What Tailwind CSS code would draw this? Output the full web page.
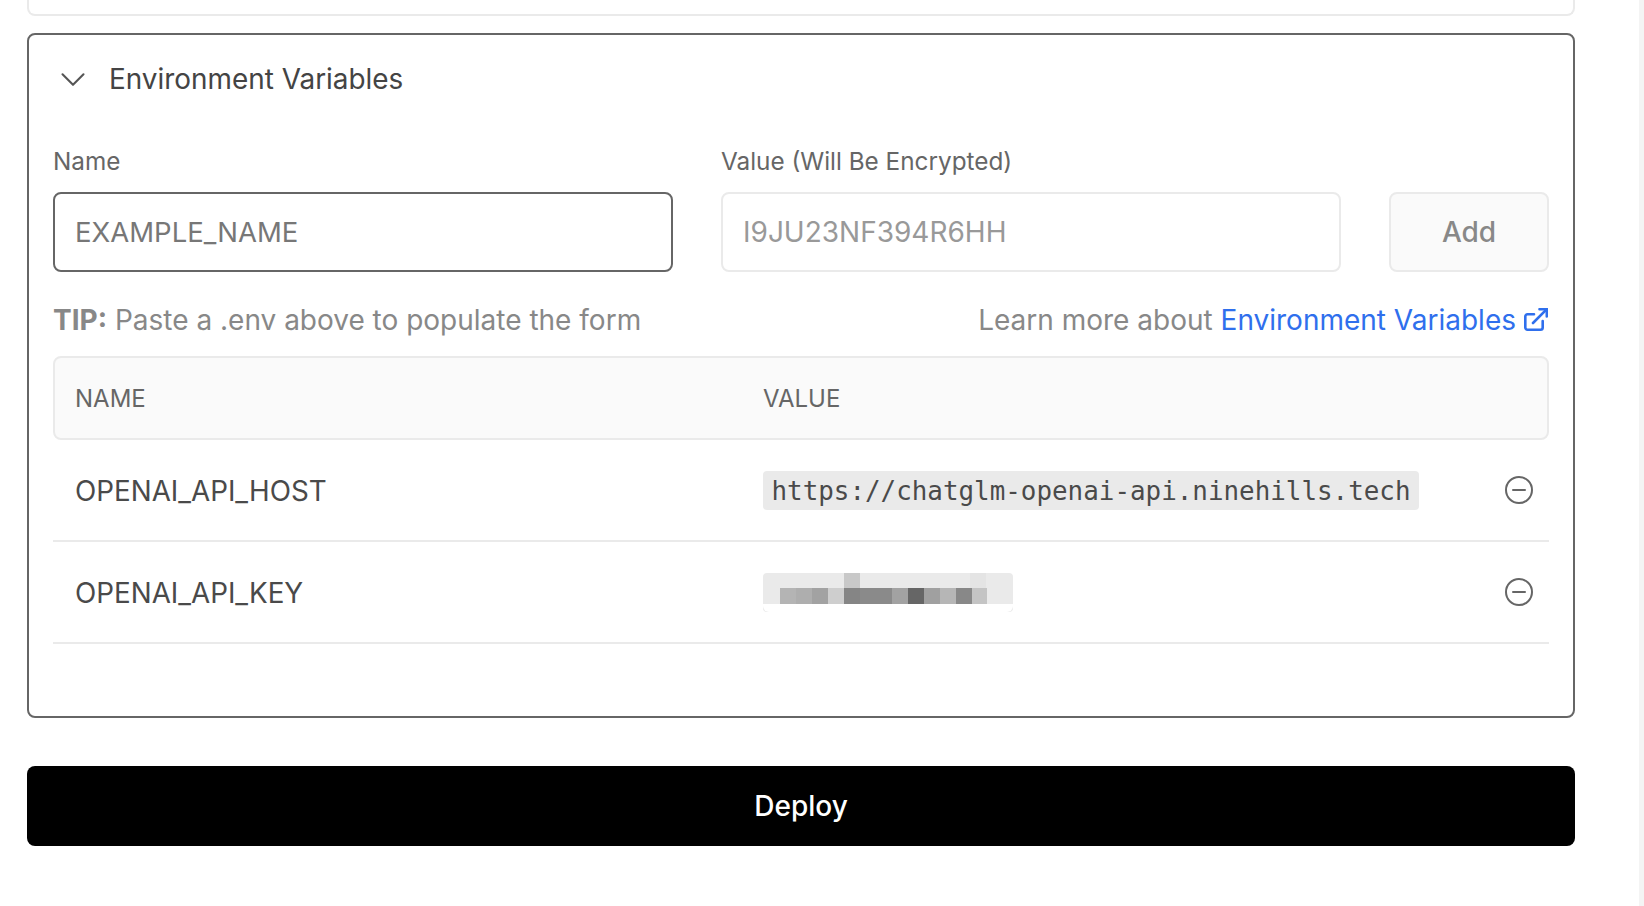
<!DOCTYPE html>
<html lang="en">
<head>
    <meta charset="UTF-8">
    <title>Environment Variables</title>
    <script src="https://cdn.jsdelivr.net/npm/@tailwindcss/browser@4"></script>
</head>
<body class="relative bg-white font-['Inter',sans-serif] overflow-hidden h-[906px]">
    <div class="w-[1548px] ml-[27px]">
        <!-- bottom edge of the card above -->
        <div class="h-[16px] border-2 border-t-0 border-[#eaeaea] rounded-b-[8px]"></div>

        <!-- Environment Variables panel -->
        <section class="mt-[17px] h-[685px] border-2 border-[#666] rounded-[8px] px-[24px]">
            <div class="flex items-center h-[87px] text-[#444]">
                <svg class="w-[28px] h-[28px] ml-[6px]" viewBox="0 0 24 24" fill="none" stroke="#555" stroke-width="1.8" stroke-linecap="round" stroke-linejoin="round"><path d="M3 8l9 9 9-9"/></svg>
                <span class="ml-[22px] pt-[2px] text-[27.900px]">Environment Variables</span>
            </div>

            <div class="flex items-end mt-[22px]">
                <div class="w-[620px]">
                    <label class="block text-[24.300px] leading-[34px] text-[#666]">Name</label>
                    <div class="mt-[14px] h-[80px] flex items-center px-[20px] pt-[2px] border-2 border-[#666] rounded-[8px] text-[27.500px] text-[#777]">EXAMPLE_NAME</div>
                </div>
                <div class="w-[620px] ml-[48px]">
                    <label class="block text-[24.300px] leading-[34px] text-[#666]">Value (Will Be Encrypted)</label>
                    <div class="mt-[14px] h-[80px] flex items-center px-[20px] border-2 border-[#eaeaea] rounded-[8px] text-[28px] text-[#999]">I9JU23NF394R6HH</div>
                </div>
                <button class="w-[160px] ml-[48px] h-[80px] bg-[#fafafa] border-2 border-[#eaeaea] rounded-[8px] text-[28px] font-medium text-[#888]">Add</button>
            </div>

            <div class="flex justify-between items-center h-[84px] pt-[12px] text-[28px] text-[#888]">
                <p><b class="font-bold">TIP:</b> Paste a .env above to populate the form</p>
                <p class="flex items-center">Learn more about&nbsp;<a href="#" class="text-[#2f6fed]">Environment Variables</a>
                    <svg class="w-[24px] h-[24px] ml-[8px] mr-[1px]" viewBox="0 0 24 24" fill="none" stroke="#2f6fed" stroke-width="2.6" stroke-linecap="round" stroke-linejoin="round"><path d="M10 6.200H3.500a2.200 2.200 0 0 0-2.200 2.200v11.200a2.200 2.200 0 0 0 2.200 2.200h13a2.200 2.200 0 0 0 2.200-2.200V13"/><path d="M9 15L22.800 1.200"/><path d="M15.500 1.200h7.300v7.300"/></svg>
                </p>
            </div>

            <!-- table -->
            <div class="flex items-center h-[84px] pt-[2px] bg-[#fafafa] border-2 border-[#eaeaea] rounded-[8px] text-[24px] text-[#666]">
                <div class="w-[708px] pl-[20px]">NAME</div>
                <div>VALUE</div>
            </div>
            <div class="flex items-center h-[102px] border-b-2 border-[#eaeaea] text-[27.800px] text-[#4a4a4a]">
                <div class="w-[710px] pl-[22px] pt-[3px]">OPENAI_API_HOST</div>
                <code class="w-[656px] h-[39px] flex items-center justify-center pt-[2px] bg-[#eaeaea] rounded-[4px] font-['DejaVu_Sans_Mono',monospace] text-[25.900px]">https://chatglm-openai-api.ninehills.tech</code>
                <svg class="w-[32px] h-[32px] ml-[84px]" viewBox="0 0 32 32" fill="none" stroke="#666" stroke-width="2" stroke-linecap="round"><circle cx="16" cy="16" r="13"/><path d="M10 16h12"/></svg>
            </div>
            <div class="flex items-center h-[102px] border-b-2 border-[#eaeaea] text-[27.800px] text-[#4a4a4a]">
                <div class="w-[710px] pl-[22px] pt-[3px]">OPENAI_API_KEY</div>
                <!-- pixelated secret value -->
                <div class="w-[250px] h-[39px] rounded-[4px] overflow-hidden bg-[#eaeaea]">
                    <div class="flex h-[15px] pl-[81px]"><i class="w-[16px] bg-[#c8c8c8]"></i><i class="w-[16px] ml-[110px] bg-[#e4e4e4]"></i></div>
                    <div class="flex h-[16px] pl-[17px]">
                        <i class="w-[16px] bg-[#b4b4b4]"></i><i class="w-[16px] bg-[#aeaeae]"></i><i class="w-[16px] bg-[#a2a2a2]"></i><i class="w-[16px] bg-[#cecece]"></i><i class="w-[16px] bg-[#858585]"></i><i class="w-[16px] bg-[#8a8a8a]"></i><i class="w-[16px] bg-[#8a8a8a]"></i><i class="w-[16px] bg-[#a2a2a2]"></i><i class="w-[16px] bg-[#666]"></i><i class="w-[16px] bg-[#a0a0a0]"></i><i class="w-[16px] bg-[#b6b6b6]"></i><i class="w-[16px] bg-[#888]"></i><i class="w-[15px] bg-[#c4c4c4]"></i>
                    </div>
                    <div class="h-[8px] bg-white rounded-b-[6px]"></div>
                </div>
                <svg class="w-[32px] h-[32px] ml-[490px]" viewBox="0 0 32 32" fill="none" stroke="#666" stroke-width="2" stroke-linecap="round"><circle cx="16" cy="16" r="13"/><path d="M10 16h12"/></svg>
            </div>
        </section>

        <button class="block w-full mt-[48px] h-[80px] bg-black rounded-[8px] text-white text-[28px] font-medium">Deploy</button>
    </div>

    <!-- scrollbar track -->
    <div class="absolute top-0 right-0 bottom-0 w-[5px] bg-[#f4f4f4]"></div>
</body>
</html>
